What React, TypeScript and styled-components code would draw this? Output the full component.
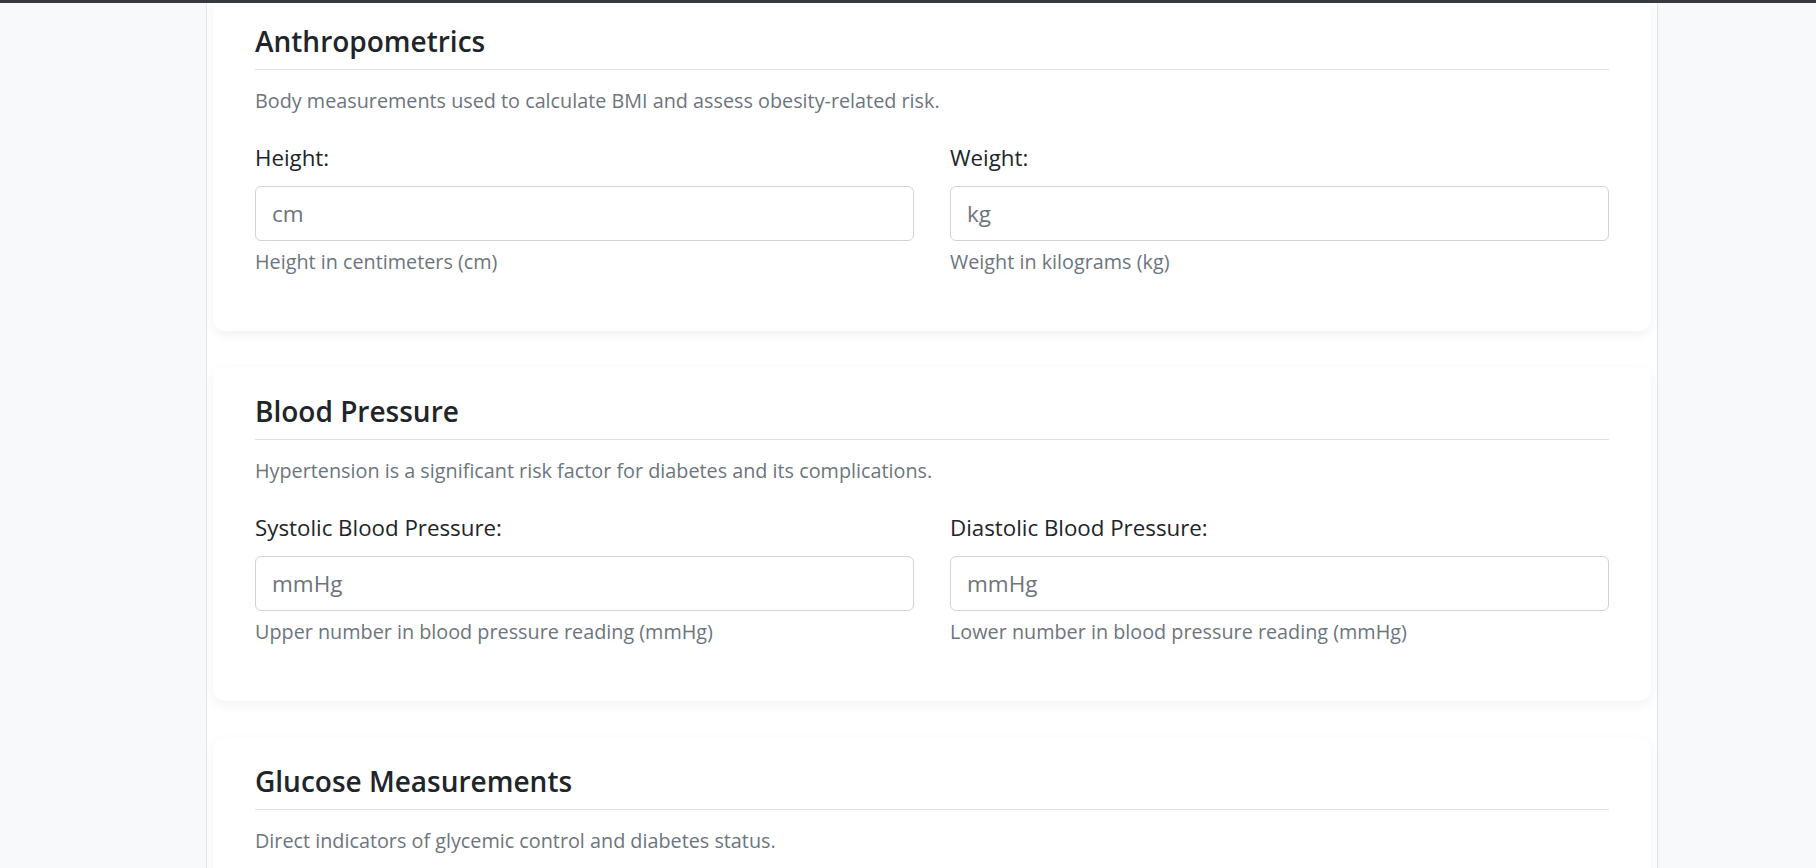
import styled, { createGlobalStyle } from 'styled-components';

const GlobalStyle = createGlobalStyle`
  * {
    box-sizing: border-box;
  }

  body {
    margin: 0;
    background: #f8f9fa;
    color: #212529;
    font-family: "Open Sans", "Noto Sans", sans-serif;
  }
`;

const TopEdge = styled.div`
  position: fixed;
  top: 0;
  left: 0;
  right: 0;
  height: 3px;
  background: #343a40;
  z-index: 10;
`;

const Page = styled.div`
  min-height: 100vh;
  margin-left: 206px;
  width: 1452px;
  padding: 0 6px 40px;
  background: #ffffff;
  border-left: 1px solid #e4e7ea;
  border-right: 1px solid #dfe2e6;
`;

const Sections = styled.div`
  display: grid;
  gap: 36px;
  margin-top: -3px;
`;

const Card = styled.section`
  background: #ffffff;
  border-radius: 12px;
  padding: 27px 42px 39px;
  box-shadow: 0 4px 12px rgba(0, 0, 0, 0.055);
`;

const SectionTitle = styled.h3`
  margin: 0;
  padding-bottom: 11px;
  border-bottom: 1px solid #dee2e6;
  font-size: 28px;
  font-weight: 600;
  line-height: 34px;
  color: #212529;
`;

const SectionText = styled.p`
  margin: 16px 0 0;
  font-size: 19.8px;
  line-height: 30px;
  color: #6c757d;
`;

const Fields = styled.div`
  display: grid;
  grid-template-columns: 1fr 1fr;
  column-gap: 36px;
  margin-top: 25px;
`;

const Field = styled.div`
  display: flex;
  flex-direction: column;
  margin-bottom: 15px;
`;

const Label = styled.label`
  font-size: 22.3px;
  line-height: 33px;
  color: #212529;
  margin-bottom: 12px;
`;

const Input = styled.input`
  height: 55px;
  width: 100%;
  padding: 0 16px;
  border: 1px solid #ced4da;
  border-radius: 6px;
  background: #ffffff;
  font-family: inherit;
  font-size: 22.5px;
  color: #212529;
  outline: none;

  &::placeholder {
    color: #6c757d;
    opacity: 1;
  }
`;

const Help = styled.div`
  margin-top: 6px;
  font-size: 19.8px;
  line-height: 30px;
  color: #6c757d;
`;

type FieldDef = { id: string; label: string; unit: string; help: string };

const sections: { title: string; text: string; fields: FieldDef[] }[] = [
  {
    title: 'Anthropometrics',
    text: 'Body measurements used to calculate BMI and assess obesity-related risk.',
    fields: [
      { id: 'height', label: 'Height:', unit: 'cm', help: 'Height in centimeters (cm)' },
      { id: 'weight', label: 'Weight:', unit: 'kg', help: 'Weight in kilograms (kg)' },
    ],
  },
  {
    title: 'Blood Pressure',
    text: 'Hypertension is a significant risk factor for diabetes and its complications.',
    fields: [
      {
        id: 'systolic',
        label: 'Systolic Blood Pressure:',
        unit: 'mmHg',
        help: 'Upper number in blood pressure reading (mmHg)',
      },
      {
        id: 'diastolic',
        label: 'Diastolic Blood Pressure:',
        unit: 'mmHg',
        help: 'Lower number in blood pressure reading (mmHg)',
      },
    ],
  },
  {
    title: 'Glucose Measurements',
    text: 'Direct indicators of glycemic control and diabetes status.',
    fields: [],
  },
];

export default function App() {
  return (
    <>
      <GlobalStyle />
      <TopEdge />
      <Page>
        <Sections>
          {sections.map((section) => (
            <Card key={section.title}>
              <SectionTitle>{section.title}</SectionTitle>
              <SectionText>{section.text}</SectionText>
              {section.fields.length > 0 && (
                <Fields>
                  {section.fields.map((field) => (
                    <Field key={field.id}>
                      <Label htmlFor={field.id}>{field.label}</Label>
                      <Input id={field.id} type="number" placeholder={field.unit} />
                      <Help>{field.help}</Help>
                    </Field>
                  ))}
                </Fields>
              )}
            </Card>
          ))}
        </Sections>
      </Page>
    </>
  );
}
